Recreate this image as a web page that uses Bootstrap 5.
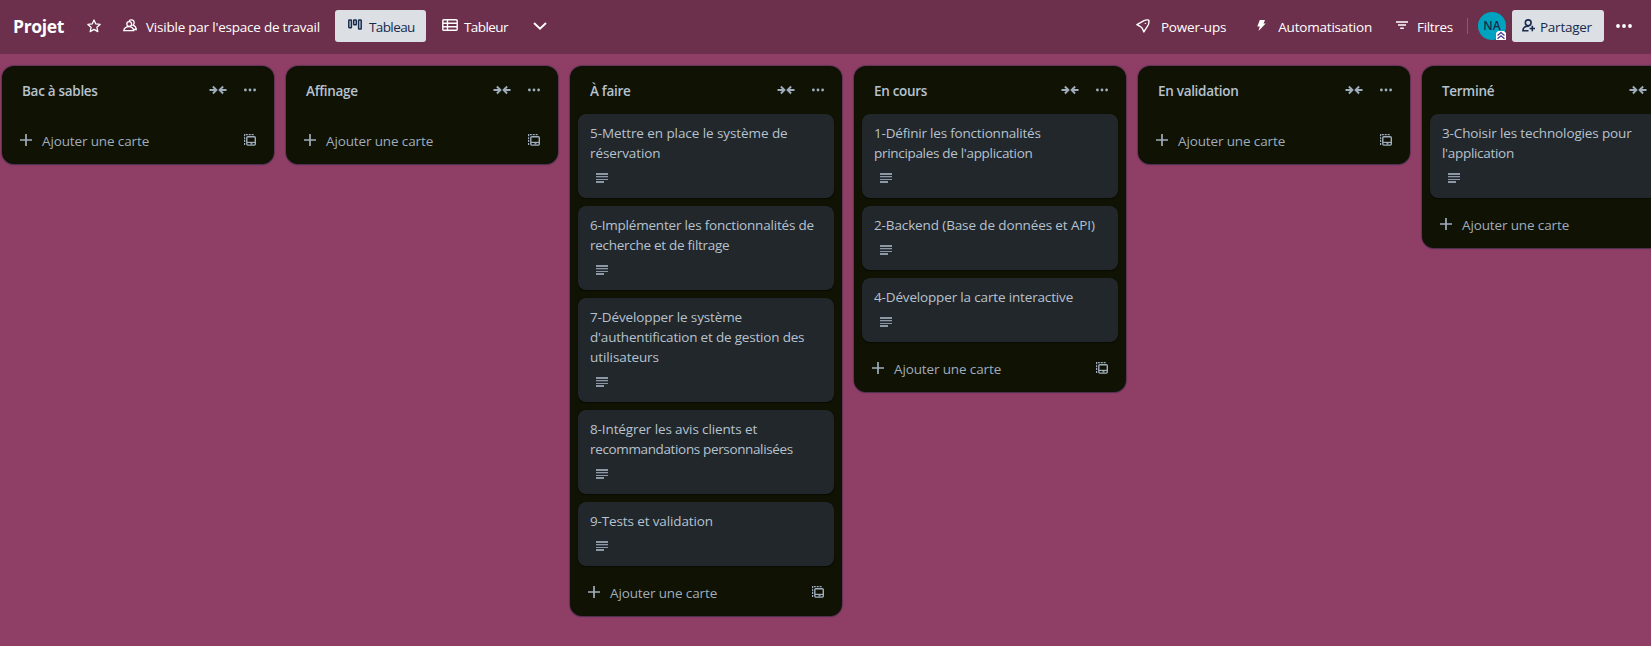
<!DOCTYPE html>
<html lang="fr">
<head>
<meta charset="utf-8">
<meta name="viewport" content="width=device-width, initial-scale=1">
<title>Projet</title>
<link href="https://cdn.jsdelivr.net/npm/bootstrap@5.3.0/dist/css/bootstrap.min.css" rel="stylesheet">
<style>
body{font-family:"Open Sans","Noto Sans",sans-serif;font-size:13.5px;line-height:20px;background:#8f3f65;color:#b6c2cf;height:646px;overflow:hidden}
svg{display:block;flex:none;fill:none;stroke:currentColor}
.topbar{height:54px;background:#6d304c;color:#fff;letter-spacing:-.2px;padding-bottom:2px}
.board-title{font-size:17.5px;letter-spacing:-.35px;margin:0;width:74px;padding-left:13px;line-height:24px}
.bar-btn{height:32px;color:#fff;font-size:13.5px;letter-spacing:inherit;line-height:20px;padding:1px 0 0;border:0;border-radius:3px;display:flex;align-items:center;white-space:nowrap}
.bar-btn svg{margin-top:-2px}
.bar-light,.bar-light:hover{background:#dcdfe4;color:#172b4d}
.divider{width:1px;height:16px;background:#8b5a70;margin:0 10px 0 14px}
.avatar{width:28px;height:28px;background:#00a3bf;color:#172b4d;font-size:12px;line-height:28px;letter-spacing:.1px}
.avatar svg{position:absolute;right:0;bottom:0}
.lists{padding:12px 2px;gap:12px}
.board-list{width:272px;background:#101204;border-radius:12px;box-shadow:0 1px 1px rgba(9,30,66,.25),0 0 1px 1px rgba(9,30,66,.31)}
.list-head{height:48px;padding:1px 18px 0 20px}
.list-head h2{font-size:13.5px;line-height:20px;margin:1px 0 0;font-weight:600;letter-spacing:-.3px}
.list-head .gap-icon{margin-right:17px}
.list-head svg,.list-foot svg{color:#9fadbc}
.list-head svg{margin-top:-1px}
.task-card{width:256px;background:#22272b;border-radius:8px;padding:9px 12px 15px;margin:0 8px 8px;box-shadow:0 1px 1px rgba(3,4,4,.5),0 0 1px rgba(3,4,4,.5)}
.task-card svg{margin:10px 0 0 6px;color:#9fadbc}
.list-foot{height:50px;padding:2px 18px 0;color:#9fadbc;letter-spacing:-.13px}
.list-foot span{margin:2px auto 0 10px}
.task-card + .list-foot{margin-top:-8px}
</style>
</head>
<body>
<svg class="d-none">
<symbol id="desc" viewBox="0 0 12 10"><g fill="currentColor" stroke="none"><path d="M0 0h12v2H0zM0 6h12v1H0zM0 3h12v1H0zM0 8h8v2H0z" opacity=".85"/><path d="M0 4h12v1H0z" opacity=".25"/></g></symbol>
<symbol id="collapse" viewBox="0 0 18 10"><path d="M.5 5H7M3.900 1.500 7.400 5 3.900 8.500M17.500 5H11M14.100 1.500 10.600 5l3.500 3.500" stroke="currentColor" stroke-width="1.900"/></symbol>
<symbol id="dots" viewBox="0 0 12 4"><g fill="currentColor" stroke="none"><circle cx="1.400" cy="2" r="1.400"/><circle cx="6" cy="2" r="1.400"/><circle cx="10.600" cy="2" r="1.400"/></g></symbol>
<symbol id="plus" viewBox="0 0 12 12"><path d="M6 0v12M0 6h12" stroke="currentColor" stroke-width="1.700"/></symbol>
<symbol id="template" viewBox="0 0 12 12"><path d="M.6 11V.6H10" stroke="currentColor" stroke-width="1.200" stroke-dasharray="2 .9"/><rect x="2.800" y="2.800" width="8.500" height="8.300" rx="1" stroke="currentColor" stroke-width="1.400"/><path d="M3 8.400h8" stroke="currentColor" stroke-width="1.200"/><path d="M6.500 9.800h2" stroke="currentColor" stroke-width="1.400"/></symbol>
</svg>

<header class="topbar d-flex align-items-center justify-content-between">
  <div class="d-flex align-items-center">
    <h1 class="board-title fw-bold">Projet</h1>
    <button class="btn bar-btn" style="margin-left:13px"><svg width="14" height="14" viewBox="0 0 14 14"><path d="m7 1 1.8 3.9 4.3.5-3.2 2.9.9 4.3L7 10.4l-3.8 2.2.9-4.3L.9 5.4l4.3-.5z" stroke-width="1.3" stroke-linejoin="round"/></svg></button>
    <button class="btn bar-btn" style="margin-left:22px;letter-spacing:-.22px"><svg width="14" height="13" viewBox="0 0 14 13" stroke-width="1.3"><circle cx="6.2" cy="5" r="2.4"/><path d="M.8 11.7C1.2 8.8 3.4 7.6 6 7.6s4.3 1.2 4.7 4.1zM6 1.8C7.6.2 11 .5 11.2 3.4c.1 1.3-.6 2.2-1.3 2.8 2 .6 3.2 2 3.4 4.3h-2.6"/></svg><span style="margin-left:9px">Visible par l'espace de travail</span></button>
    <button class="btn bar-btn bar-light" style="width:91px;margin-left:15px;padding-left:13px;letter-spacing:-.6px"><svg width="14" height="11" viewBox="0 0 14 11" stroke-width="1.5" style="margin-top:-5px"><rect x=".8" y=".9" width="2.6" height="7.8" rx=".5"/><rect x="5.7" y=".9" width="2.6" height="4.8" rx=".5"/><rect x="10.6" y=".9" width="2.6" height="9" rx=".5"/></svg><span style="margin-left:7px">Tableau</span></button>
    <button class="btn bar-btn" style="margin-left:16px;letter-spacing:-.57px"><svg width="16" height="12" viewBox="0 0 16 12" stroke-width="1.4" style="margin-top:-4px"><rect x=".8" y=".8" width="14.4" height="10.4" rx="1"/><path d="M1 4.2h14M1 7.7h14M5.5 1v10"/></svg><span style="margin-left:6px">Tableur</span></button>
    <button class="btn bar-btn" style="margin-left:25px"><svg width="14" height="8" viewBox="0 0 14 8" stroke-width="1.9"><path d="m1 1 6 5.7L13 1"/></svg></button>
  </div>
  <div class="d-flex align-items-center" style="padding-right:19px">
    <button class="btn bar-btn"><svg width="14" height="14" viewBox="0 0 14 14" stroke-width="1.4" stroke-linejoin="round"><path d="M.9 5.600 8 1.600c1.600-.8 3.400-.9 4.800-.5.3 1.600.1 3.300-.6 4.900L7.900 12.900 6.200 9.200 4.500 7.600z"/><path d="M9.400 3.900v1"/></svg><span style="margin-left:11px">Power-ups</span></button>
    <button class="btn bar-btn" style="margin-left:31px"><svg width="9" height="11" viewBox="0 0 9 11"><path d="M2.800 0H8L6.500 3.600h2.200L1.500 11l1.300-4.600H.3z" fill="currentColor" stroke="none"/></svg><span style="margin-left:12px">Automatisation</span></button>
    <button class="btn bar-btn" style="margin-left:24px"><svg width="12" height="9" viewBox="0 0 12 9" stroke-width="1.5"><path d="M0 .9h12M2 4h8M4.200 7.200h3.600"/></svg><span style="margin-left:9px;letter-spacing:-.3px">Filtres</span></button>
    <div class="divider"></div>
    <div class="avatar rounded-circle position-relative text-center fw-semibold">NA<svg width="10" height="9" viewBox="0 0 10 9"><path d="M2 0h6l2 2v7H0V2z" fill="#fff" stroke="none"/><path d="m1.500 4.500 3.500-3 3.500 3M1.500 7.800l3.500-3 3.500 3" stroke="#403294" stroke-width="1.200"/></svg></div>
    <button class="btn bar-btn bar-light" style="width:92px;margin:0 12px 0 6px;padding-left:10px"><svg width="14" height="13" viewBox="0 0 14 13" stroke-width="1.6"><circle cx="6.200" cy="3.800" r="2.900"/><path d="M7 7.300C3.500 6.700.9 8.600.9 11.700h5.600M10.300 6.800v5.400M7.600 9.500H13"/></svg><span style="margin-left:4px;letter-spacing:-.25px">Partager</span></button>
    <svg width="16" height="4" viewBox="0 0 16 4"><g fill="currentColor" stroke="none"><circle cx="2" cy="2" r="1.900"/><circle cx="8" cy="2" r="1.900"/><circle cx="14" cy="2" r="1.900"/></g></svg>
  </div>
</header>

<main class="lists d-flex align-items-start" id="lists"></main>

<script>
// Each card is a list of lines: [text, tracking in px]
const board = [
  ["Bac à sables", []],
  ["Affinage", []],
  ["À faire", [
    [["5-Mettre en place le système de", -.08], ["réservation", -.1]],
    [["6-Implémenter les fonctionnalités de", -.2], ["recherche et de filtrage", -.28]],
    [["7-Développer le système", -.13], ["d'authentification et de gestion des", -.19], ["utilisateurs", -.08]],
    [["8-Intégrer les avis clients et", -.12], ["recommandations personnalisées", -.36]],
    [["9-Tests et validation", -.13]]]],
  ["En cours", [
    [["1-Définir les fonctionnalités", -.2], ["principales de l'application", -.31]],
    [["2-Backend (Base de données et API)", -.12]],
    [["4-Développer la carte interactive", -.16]]]],
  ["En validation", []],
  ["Terminé", [[["3-Choisir les technologies pour", -.13], ["l'application", -.3]]]]
];
const icon = (id, w, h, cls = "") => `<svg class="${cls}" width="${w}" height="${h}"><use href="#${id}"/></svg>`;
const line = ([text, track]) => `<div style="letter-spacing:${track}px">${text}</div>`;
document.getElementById("lists").innerHTML = board.map(([name, cards]) => `
  <section class="board-list flex-shrink-0">
    <div class="list-head d-flex align-items-center">
      <h2 class="me-auto">${name}</h2>${icon("collapse", 18, 10, "gap-icon")}${icon("dots", 12, 4)}
    </div>
    ${cards.map(c => `<article class="task-card text-nowrap">${c.map(line).join("")}${icon("desc", 12, 10)}</article>`).join("")}
    <div class="list-foot d-flex align-items-center">
      ${icon("plus", 12, 12)}<span>Ajouter une carte</span>${icon("template", 12, 12)}
    </div>
  </section>`).join("");
</script>
<script src="https://cdn.jsdelivr.net/npm/bootstrap@5.3.0/dist/js/bootstrap.bundle.min.js"></script>
</body>
</html>
